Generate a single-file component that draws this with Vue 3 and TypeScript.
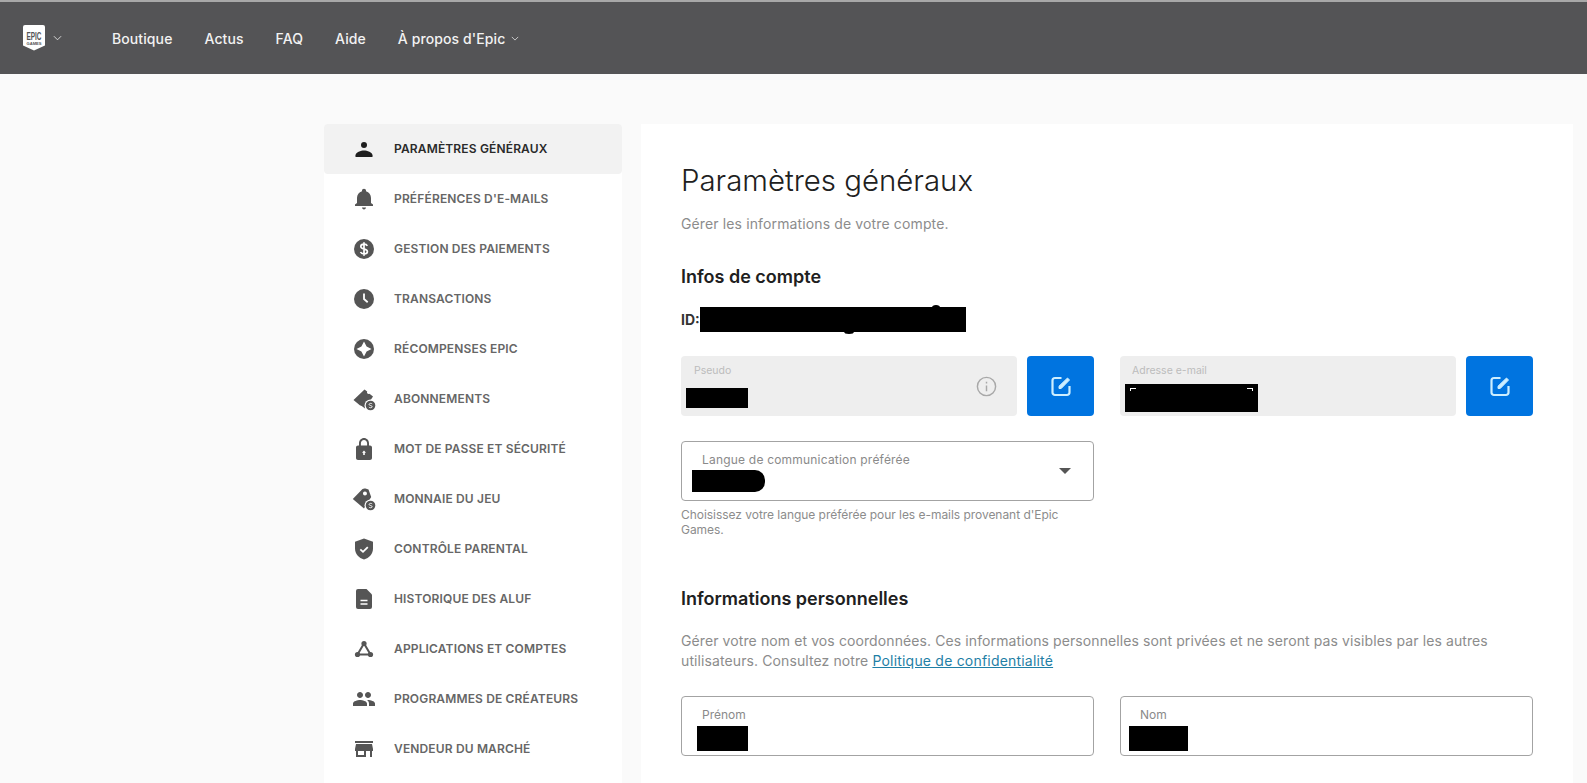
<script setup lang="ts">
interface NavItem {
  label: string
  icon: string
}

const topLinks: string[] = ['Boutique', 'Actus', 'FAQ', 'Aide']

const badge = '<circle cx="18.5" cy="18.5" r="6" fill="#fff"/><circle cx="18.5" cy="18.5" r="4.8"/><path d="M20.2 16.9c-.5-.6-2.9-.9-3.1.5-.2 1.500 3.300.8 3.100 2.400-.2 1.300-2.700 1.100-3.300.3" fill="none" stroke="#fff" stroke-width=".9"/>'

const items: NavItem[] = [
  { label: 'Paramètres généraux', icon: '<circle cx="12" cy="8" r="3"/><path d="M3.500 20v-1.800c0-2.900 5.500-4.700 8.500-4.700s8.500 1.800 8.500 4.700V20z"/>' },
  { label: "Préférences d'e-mails", icon: '<path d="M12 22.500c1.100 0 2-.9 2-1.900h-4c0 1 .9 1.900 2 1.900zm7-6.500v-5c0-3.400-1.900-6.100-5-6.800V3.500c0-1-.9-1.800-2-1.800s-2 .8-2 1.800v.7c-3.100.7-5 3.400-5 6.800v5l-2 1.600v1.400h18v-1.400z"/>' },
  { label: 'Gestion des paiements', icon: '<circle cx="12" cy="12" r="10"/><path d="M15.300 8.800c-.6-1.200-1.800-1.700-3.200-1.700-1.800 0-3.300.9-3.300 2.400 0 3.300 6.600 1.700 6.600 5 0 1.500-1.500 2.400-3.400 2.400-1.500 0-2.900-.6-3.500-1.900M12 5.300v13.400" fill="none" stroke="#fff" stroke-width="1.700"/>' },
  { label: 'Transactions', icon: '<circle cx="12" cy="12" r="10"/><path d="M12 6.500V12l3.700 3.200" fill="none" stroke="#fff" stroke-width="1.800"/>' },
  { label: 'Récompenses Epic', icon: '<circle cx="12" cy="12" r="10"/><path d="M12 4.500l2.600 4.900 4.900 2.600-4.900 2.600-2.600 4.900-2.600-4.900L4.500 12l4.900-2.600z" fill="#fff"/>' },
  { label: 'Abonnements', icon: '<path d="M1.500 13L12.500 2.500l2.700 2c-.8 1.500.8 3.100 2.300 2.300l3.500 2.700L13 21.500l-3.300-2.600-1.900-.7z"/>' + badge },
  { label: 'Mot de passe et sécurité', icon: '<path fill-rule="evenodd" d="M18 8.500h-1V6.200C17 3.400 14.800 1 12 1S7 3.400 7 6.200v2.300H6c-1.100 0-2 .9-2 2V21c0 1.100.9 2 2 2h12c1.100 0 2-.9 2-2V10.500c0-1.100-.9-2-2-2zM15.100 8.500H8.900V6.200C8.900 4.500 10.300 3 12 3s3.100 1.500 3.100 3.200z"/><path d="M12 13.500l-2 2.200h1.200V18h1.600v-2.300H14z" fill="#fff"/>' },
  { label: 'Monnaie du jeu', icon: '<path fill-rule="evenodd" d="M.8 12L10 2.500c.7-.7 2.600-1 3.500-.9l3 .9 2.700 7.500L12 21.500zM13 8.500a2 2 0 1 0-.1-4 2 2 0 0 0 .1 4z"/>' + badge },
  { label: 'Contrôle parental', icon: '<path d="M12 1.500l9 3.200v6.800c0 5.200-3.800 9.700-9 11-5.200-1.300-9-5.800-9-11V4.700z"/><path d="M8.300 12.300l2.700 2.500 4.800-4.700" fill="none" stroke="#fff" stroke-width="1.800"/>' },
  { label: 'Historique des ALUF', icon: '<path d="M6 2h8.500L20 7.500V20a2 2 0 0 1-2 2H6a2 2 0 0 1-2-2V4a2 2 0 0 1 2-2z"/><path d="M8.500 13.500h7M8.500 17h7" fill="none" stroke="#fff" stroke-width="1.700"/>' },
  { label: 'Applications et comptes', icon: '<path d="M12 6.500L5.500 17.500h13z" fill="none" stroke="#555" stroke-width="2"/><circle cx="12" cy="6.500" r="2.600"/><circle cx="5.500" cy="17.500" r="2.600"/><circle cx="18.500" cy="17.500" r="2.600"/>' },
  { label: 'Programmes de créateurs', icon: '<path d="M16 11c1.660 0 3-1.340 3-3s-1.340-3-3-3-3 1.340-3 3 1.340 3 3 3zm-8 0c1.660 0 3-1.340 3-3S9.660 5 8 5 5 6.340 5 8s1.340 3 3 3zm0 2c-2.330 0-7 1.170-7 3.500V19h14v-2.500c0-2.330-4.670-3.500-7-3.500zm8 0c-.290 0-.620.020-.970.050 1.160.840 1.970 1.970 1.970 3.450V19h6v-2.500c0-2.330-4.670-3.500-7-3.500z"/>' },
  { label: 'Vendeur du marché', icon: '<path fill-rule="evenodd" d="M21 4H3v2h18zm0 10v-2l-1-5H4l-1 5v2h1v6h10v-6h4v6h2v-6zM12 18H6v-4h6z"/>' },
]
</script>

<template>
  <div class="page">
    <header class="topbar">
      <div class="logo-group">
        <svg class="logo" viewBox="0 0 22 26" width="22" height="26">
          <path d="M2 0h18a2 2 0 0 1 2 2v18.500l-11 5-11-5V2a2 2 0 0 1 2-2z" fill="#fff" />
          <text x="11" y="15" text-anchor="middle" textLength="15" lengthAdjust="spacingAndGlyphs" class="logo-epic">EPIC</text>
          <text x="11" y="20" text-anchor="middle" textLength="15" lengthAdjust="spacingAndGlyphs" class="logo-games">GAMES</text>
        </svg>
        <svg class="chev" viewBox="0 0 10 6" width="9" height="6"><path d="M1 1l4 4 4-4" /></svg>
      </div>
      <nav class="toplinks">
        <a v-for="l in topLinks" :key="l">{{ l }}</a>
        <a class="with-chev">À propos d'Epic
          <svg class="chev" viewBox="0 0 10 6" width="8" height="5"><path d="M1 1l4 4 4-4" /></svg>
        </a>
      </nav>
    </header>

    <div class="body">
      <aside class="side">
        <div v-for="(it, i) in items" :key="it.label" class="side-item" :class="{ active: i === 0 }">
          <svg class="side-icon" viewBox="0 0 24 24" width="24" height="24" v-html="it.icon"></svg>
          <span>{{ it.label }}</span>
        </div>
      </aside>

      <main class="card">
        <h1>Paramètres généraux</h1>
        <p class="sub">Gérer les informations de votre compte.</p>

        <h2 class="h-account">Infos de compte</h2>
        <div class="id-row"><b>ID:</b><span class="mask mask-id"></span></div>

        <div class="two">
          <div class="with-btn">
            <div class="field locked">
              <label>Pseudo</label>
              <span class="mask mask-pseudo"></span>
              <svg class="info" viewBox="0 0 24 24" width="23" height="23">
                <circle cx="12" cy="12" r="9.500" />
                <path d="M12 11v6M12 7v1.800" />
              </svg>
            </div>
            <button class="edit" aria-label="Modifier">
              <svg viewBox="0 0 24 24" width="24" height="24"><path d="M12.500 4H6a2.500 2.500 0 0 0-2.500 2.500v12A2.500 2.500 0 0 0 6 21h12a2.500 2.500 0 0 0 2.500-2.500V12" /><path class="pen" d="M10 14.500v-2.300L18.500 4l2 2-8.300 8.500z" /></svg>
            </button>
          </div>
          <div class="with-btn">
            <div class="field locked">
              <label class="lab-mail">Adresse e-mail</label>
              <span class="mask mask-email"><i class="tick left"></i><i class="tick right"></i></span>
            </div>
            <button class="edit" aria-label="Modifier">
              <svg viewBox="0 0 24 24" width="24" height="24"><path d="M12.500 4H6a2.500 2.500 0 0 0-2.500 2.500v12A2.500 2.500 0 0 0 6 21h12a2.500 2.500 0 0 0 2.500-2.500V12" /><path class="pen" d="M10 14.500v-2.300L18.500 4l2 2-8.300 8.500z" /></svg>
            </button>
          </div>
        </div>

        <div class="two lang-row">
          <div>
            <div class="field outlined">
              <label class="lab-lang">Langue de communication préférée</label>
              <span class="mask mask-lang"></span>
              <span class="caret"></span>
            </div>
            <p class="help">Choisissez votre langue préférée pour les e-mails provenant d'Epic Games.</p>
          </div>
        </div>

        <h2 class="h-personal">Informations personnelles</h2>
        <p class="para">Gérer votre nom et vos coordonnées. Ces informations personnelles sont privées et ne seront pas visibles par les autres utilisateurs. Consultez notre <a class="link">Politique de confidentialité</a></p>

        <div class="two name-row">
          <div class="field outlined">
            <label class="lab-name">Prénom</label>
            <span class="mask mask-first"></span>
          </div>
          <div class="field outlined">
            <label class="lab-name lab-last">Nom</label>
            <span class="mask mask-last"></span>
          </div>
        </div>
      </main>
    </div>
  </div>
</template>

<style>
html,
body {
  margin: 0;
  background: #fafafa;
}
</style>

<style scoped>
.page {
  height: 783px;
  overflow: hidden;
  background: #fafafa;
  font-family: Inter, "Liberation Sans", sans-serif;
  color: #202020;
}
.topbar {
  height: 72px;
  border-top: 2px solid #a8a8a8;
  background: #545456;
  display: flex;
  align-items: center;
  padding-left: 23px;
  color: #f2f2f2;
}
.logo-group {
  display: flex;
  align-items: center;
  gap: 8px;
  width: 89px;
}
.logo {
  overflow: visible;
}
.logo-epic {
  font: 700 11px "Liberation Sans", sans-serif;
  fill: #545456;
}
.logo-games {
  font: 700 3.500px "Liberation Sans", sans-serif;
  fill: #545456;
}
.chev path {
  fill: none;
  stroke: #e4e4e4;
  stroke-width: 1;
}
.toplinks {
  display: flex;
  gap: 32px;
  font-size: 14px;
  font-weight: 500;
  letter-spacing: .1px;
}
.with-chev {
  display: flex;
  align-items: center;
  gap: 6px;
}
.body {
  display: flex;
  gap: 19px;
  padding: 50px 14px 0 324px;
}
.side {
  width: 298px;
  flex: none;
  background: #fff;
  height: 700px;
  border-radius: 4px;
}
.side-item {
  height: 50px;
  display: flex;
  align-items: center;
  padding-left: 28px;
  gap: 18px;
  font-size: 12px;
  font-weight: 600;
  text-transform: uppercase;
  letter-spacing: .15px;
  color: #666;
  border-radius: 4px;
}
.side-item span {
  margin-bottom: 2px;
}
.side-item.active {
  background: #f2f2f2;
  color: #2a2a2a;
}
.side-icon {
  fill: #555;
  flex: none;
  overflow: visible;
}
.active .side-icon {
  fill: #1f1f1f;
}
.card {
  flex: 1;
  min-width: 0;
  background: #fff;
  padding: 39px 40px 0 40px;
  height: 700px;
  box-sizing: border-box;
}
h1 {
  margin: 0;
  font-size: 29.400px;
  line-height: 36px;
  font-weight: 300;
  color: #202020;
}
.sub {
  margin: 15px 0 0;
  font-size: 14px;
  line-height: 20px;
  letter-spacing: .13px;
  color: #8c8c8c;
}
h2 {
  margin: 0;
  font-size: 18px;
  line-height: 24px;
  font-weight: 600;
  color: #202020;
}
.h-account {
  margin-top: 31px;
}
.id-row {
  margin-top: 18px;
  display: flex;
  align-items: center;
  height: 25px;
  font-size: 14px;
  color: #333;
}
.mask {
  display: block;
  background: #000;
}
.mask-id {
  position: relative;
  width: 266px;
  height: 25px;
}
.mask-id::before,
.mask-id::after {
  content: "";
  position: absolute;
  background: #000;
  border-radius: 50%;
}
.mask-id::before {
  left: 232px;
  top: -2px;
  width: 8px;
  height: 5px;
}
.mask-id::after {
  left: 144px;
  bottom: -2px;
  width: 10px;
  height: 5px;
}
.two {
  margin-top: 24px;
  display: grid;
  grid-template-columns: 413px 413px;
  column-gap: 26px;
}
.with-btn {
  display: flex;
  gap: 10px;
}
.field {
  position: relative;
  flex: 1;
  height: 60px;
  box-sizing: border-box;
  border-radius: 4px;
}
.locked {
  background: #eee;
}
.outlined {
  background: #fff;
  border: 1px solid #a3a3a3;
}
label {
  display: block;
}
.locked label {
  font-size: 10.500px;
  line-height: 14px;
  color: #bcbcbc;
  padding: 8px 0 0 13px;
}
.locked .lab-mail {
  padding-left: 12px;
}
.mask-pseudo {
  margin: 10px 0 0 5px;
  width: 62px;
  height: 20px;
}
.mask-email {
  position: relative;
  margin: 6px 0 0 5px;
  width: 133px;
  height: 28px;
}
.tick {
  position: absolute;
  top: 4px;
  width: 5px;
  height: 2px;
  border-top: 1px solid #fff;
}
.tick.left {
  left: 5px;
  border-left: 1px solid #fff;
}
.tick.right {
  right: 5px;
  border-right: 1px solid #fff;
}
.info {
  position: absolute;
  top: 19px;
  right: 19px;
}
.info circle,
.info path {
  fill: none;
  stroke: #a8a8a8;
  stroke-width: 1.500;
}
.edit {
  width: 67px;
  height: 60px;
  flex: none;
  padding: 0;
  border: 0;
  border-radius: 4px;
  background: #0074e0;
  display: flex;
  align-items: center;
  justify-content: center;
}
.edit path {
  fill: none;
  stroke: #cdeeff;
  stroke-width: 2.200;
}
.edit .pen {
  fill: #cdeeff;
  stroke-width: 1;
}
.lang-row {
  margin-top: 25px;
}
.lab-lang {
  font-size: 12px;
  line-height: 15px;
  color: #8a8a8a;
  padding: 10px 0 0 20px;
  letter-spacing: .2px;
}
.mask-lang {
  margin: 3px 0 0 10px;
  width: 73px;
  height: 22px;
  border-radius: 0 10px 10px 0;
}
.caret {
  position: absolute;
  top: 26px;
  right: 22px;
  border-left: 6px solid transparent;
  border-right: 6px solid transparent;
  border-top: 6px solid #555;
}
.help {
  margin: 6px 0 0;
  font-size: 12px;
  line-height: 15px;
  letter-spacing: -.04px;
  color: #8c8c8c;
}
.h-personal {
  margin-top: 50px;
}
.para {
  margin: 20px 0 0;
  font-size: 14px;
  line-height: 20px;
  letter-spacing: .1px;
  color: #8c8c8c;
}
.link {
  color: #1f7fa6;
  text-decoration: underline;
  letter-spacing: .2px;
}
.name-row {
  margin-top: 25px;
}
.lab-name {
  font-size: 12px;
  line-height: 15px;
  color: #8a8a8a;
  padding: 10px 0 0 20px;
}
.lab-name.lab-last {
  padding-left: 19px;
}
.mask-first {
  margin: 4px 0 0 15px;
  width: 51px;
  height: 25px;
}
.mask-last {
  margin: 4px 0 0 8px;
  width: 59px;
  height: 25px;
}
</style>
